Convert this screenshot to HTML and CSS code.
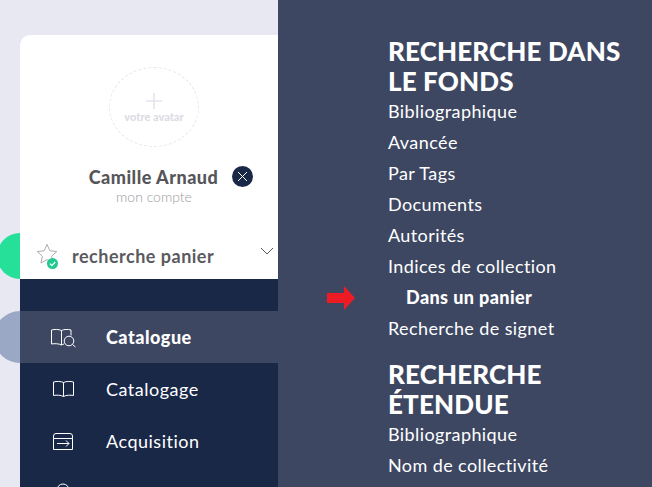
FILE: index.html
```html
<!DOCTYPE html>
<html lang="fr">
<head>
<meta charset="utf-8">
<title>Recherche panier</title>
<link rel="stylesheet" href="styles.css">
</head>
<body>
<div class="page">
  <aside class="side">
    <div class="card">
      <div class="profile">
        <div class="avatar">
          <svg class="avatar-plus" width="18" height="18" viewBox="0 0 18 18"><path d="M9 1v16M1 9h16" stroke="#e4e4ee" stroke-width="1.6" fill="none"/></svg>
          <span class="avatar-text">votre avatar</span>
        </div>
        <div class="name-row">
          <span class="name">Camille Arnaud</span>
          <span class="close"><svg width="21" height="21" viewBox="0 0 21 21"><path d="M6 6l9 9M15 6l-9 9" stroke="#fff" stroke-width="1" fill="none"/></svg></span>
        </div>
        <div class="account">mon compte</div>
      </div>
      <div class="search">
        <span class="star">
          <svg width="22" height="22" viewBox="0 0 24 24"><path d="M12 1.500l3.100 7 7.600.8-5.700 5.100 1.600 7.500L12 18.100l-6.600 3.800L7 14.400 1.300 9.300l7.600-.8z" fill="none" stroke="#a5a5a8" stroke-width="1"/></svg>
          <span class="check"><svg width="11" height="11" viewBox="0 0 11 11"><path d="M2.800 5.600l2 2 3.400-3.600" stroke="#fff" stroke-width="1.300" fill="none"/></svg></span>
        </span>
        <span class="search-label">recherche panier</span>
        <svg class="chevron" width="14" height="8" viewBox="0 0 14 8"><path d="M1 1l6 6 6-6" fill="none" stroke="#55565a" stroke-width="1"/></svg>
      </div>
      <nav class="nav">
        <a class="nav-item active">
          <svg class="nav-icon" width="26" height="22" viewBox="0 0 26 22"><path d="M11.500 4.500C9 3.200 4.500 3.200 1.500 4v14c3-.6 7.500-.4 10 1 .8-.5 1.700-.8 2.700-1M11.500 4.500V19M11.500 4.500C14 3.200 18 3.200 21 4v5.500" fill="none" stroke="#fff" stroke-width="1"/><circle cx="19" cy="15" r="4.800" fill="none" stroke="#fff" stroke-width="1"/><path d="M22.500 18.500l3 2.500" stroke="#fff" fill="none"/></svg>
          <span>Catalogue</span>
        </a>
        <a class="nav-item">
          <svg class="nav-icon" width="26" height="22" viewBox="0 0 26 22"><path d="M13.500 4.500C11 3.200 6.500 3.200 3.500 4v13.500c3-.6 7.500-.4 10 1 2.500-1.400 7-1.600 10-1V4c-3-.8-7.500-.8-10 .5zV18.500" fill="none" stroke="#fff" stroke-width="1"/></svg>
          <span>Catalogage</span>
        </a>
        <a class="nav-item">
          <svg class="nav-icon" width="26" height="22" viewBox="0 0 26 22"><path d="M3.500 8.500h19v11h-19zM3.500 8.500V6Q3.500 3.500 6 3.500H20Q22.500 3.500 22.500 6V8.500M7 13.500h12M16 10.500l3 3-3 3" fill="none" stroke="#fff" stroke-width="1"/></svg>
          <span>Acquisition</span>
        </a>
        <a class="nav-item">
          <svg class="nav-icon" width="26" height="22" viewBox="0 0 26 22"><circle cx="13" cy="8" r="6" fill="none" stroke="#fff" stroke-width="1"/></svg>
          <span>Circulation</span>
        </a>
      </nav>
    </div>
    <span class="bubble bubble-green"></span>
    <span class="bubble bubble-blue"></span>
  </aside>
  <main class="panel">
    <h2 class="heading">RECHERCHE DANS<br>LE FONDS</h2>
    <ul class="links">
      <li>Bibliographique</li>
      <li>Avancée</li>
      <li>Par Tags</li>
      <li>Documents</li>
      <li>Autorités</li>
      <li>Indices de collection</li>
      <li class="current">
        <svg class="arrow" width="28" height="24" viewBox="0 0 28 24"><path d="M0 7h17V0l11 12-11 12v-7H0z" fill="#ed1c24"/></svg>
        Dans un panier
      </li>
      <li>Recherche de signet</li>
    </ul>
    <h2 class="heading second">RECHERCHE<br>ÉTENDUE</h2>
    <ul class="links">
      <li>Bibliographique</li>
      <li>Nom de collectivité</li>
    </ul>
  </main>
</div>
</body>
</html>
```
FILE: styles.css
```css
* { box-sizing: border-box; }
html, body { margin: 0; height: 100%; overflow: hidden; }
body { background: #e8e8f2; font-family: "Lato", "Liberation Sans", sans-serif; }
.page { display: flex; height: 487px; width: 652px; }
.side { position: relative; width: 278px; padding: 35px 0 0 20px; flex: none; }
.card { position: relative; z-index: 1; background: #fff; border-radius: 10px 0 0 0; height: 452px; display: flex; flex-direction: column; overflow: hidden; }
.profile { display: flex; flex: none; flex-direction: column; align-items: center; padding-top: 32px; height: 189px; }
.avatar { width: 90px; height: 80px; border: 1px dashed #e6e6ee; border-radius: 50%; display: flex; flex-direction: column; align-items: center; padding-top: 24px; margin-left: 10px; }
.avatar-plus { display: block; }
.avatar-text { font-size: 11px; font-weight: 900; color: #dcdce4; line-height: 13px; }
.name-row { position: relative; margin-top: 18px; margin-left: 9px; line-height: 24px; }
.name { font-size: 18px; font-weight: 900; letter-spacing: .5px; color: #56565a; }
.close { position: absolute; left: 143px; top: 1px; width: 21px; height: 21px; border-radius: 50%; background: #1a2848; }
.close svg { display: block; }
.account { font-size: 14px; color: #9a9a9e; font-weight: 300; line-height: 16px; margin-left: 10px; margin-top: -1px; }
.search { display: flex; flex: none; align-items: center; height: 55px; padding: 9px 4px 0 16px; position: relative; }
.star { position: relative; width: 22px; height: 26px; margin-right: 14px; flex: none; }
.star svg { display: block; }
.check { position: absolute; right: 0; bottom: 0; width: 11px; height: 11px; border-radius: 50%; background: #1fc98f; }
.search-label { font-size: 18px; font-weight: 700; letter-spacing: .5px; color: #5a5a60; flex: 1; }
.chevron { align-self: flex-start; margin-top: 14px; }
.nav { background: #1a2848; flex: none; height: 240px; padding-top: 32px; }
.nav-item { display: flex; align-items: center; height: 52px; padding-left: 30px; color: #fff; font-size: 18px; font-weight: 400; letter-spacing: .5px; }
.nav-item span { margin-left: 30px; }
.nav-item.active { background: #3e4762; font-weight: 900; }
.nav-icon { flex: none; }
.bubble { position: absolute; border-radius: 50%; }
.bubble-green { left: -3px; top: 233px; width: 46px; height: 46px; background: #26e09a; }
.bubble-blue { left: -6px; top: 311px; width: 52px; height: 52px; background: #9aa8c6; }
.panel { flex: 1; background: #3e4762; padding: 36px 0 0 110px; color: #fff; overflow: hidden; }
.heading { margin: 0; font-size: 26px; line-height: 30px; font-weight: 900; letter-spacing: .15px; }
.second { margin-top: 15px; }
.links { list-style: none; margin: 0; padding: 0; }
.links li { position: relative; font-size: 18px; line-height: 31px; letter-spacing: .4px; }
.current { padding-left: 18px; font-weight: 900; }
.arrow { position: absolute; left: -61px; top: 4px; }
```
